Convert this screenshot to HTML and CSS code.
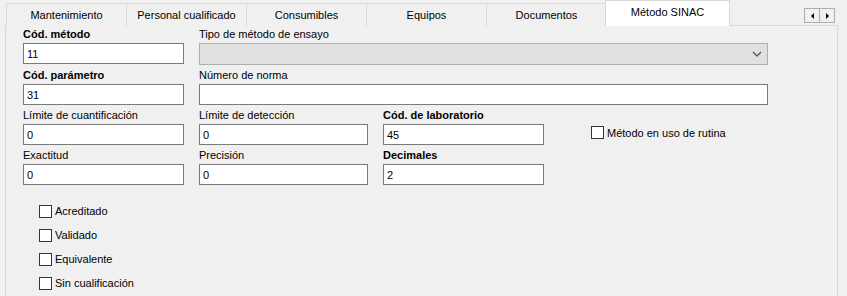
FILE: index.html
```html
<!DOCTYPE html>
<html>
<head>
    <link rel="stylesheet" href="styles.css">
</head>
<body>

<div class="tabbar">
    <div class="tab">Mantenimiento</div>
    <div class="tab">Personal cualificado</div>
    <div class="tab">Consumibles</div>
    <div class="tab">Equipos</div>
    <div class="tab">Documentos</div>
    <div class="tab active">Método SINAC</div>
    <div class="scroller">
        <span class="scroll-btn"><span class="arrow left"></span></span>
        <span class="scroll-btn"><span class="arrow right"></span></span>
    </div>
</div>

<div class="panel">
    <!-- Method fields -->
    <div class="fields">
        <div class="field">
            <label class="bold">Cód. método</label>
            <input type="text" value="11">
        </div>
        <div class="field wide">
            <label>Tipo de método de ensayo</label>
            <div class="combo">
                <svg width="10" height="6" viewBox="0 0 10 6"><path d="M1 1 L5 5 L9 1" fill="none" stroke="#555" stroke-width="1.3"/></svg>
            </div>
        </div>

        <div class="field">
            <label class="bold">Cód. parámetro</label>
            <input type="text" value="31">
        </div>
        <div class="field wide">
            <label>Número de norma</label>
            <input type="text" value="">
        </div>

        <div class="field">
            <label>Límite de cuantificación</label>
            <input type="text" value="0">
        </div>
        <div class="field">
            <label>Límite de detección</label>
            <input type="text" value="0">
        </div>
        <div class="field">
            <label class="bold">Cód. de laboratorio</label>
            <input type="text" value="45">
        </div>
        <div class="field routine">
            <div class="check"><span class="box"></span>Método en uso de rutina</div>
        </div>

        <div class="field">
            <label>Exactitud</label>
            <input type="text" value="0">
        </div>
        <div class="field">
            <label>Precisión</label>
            <input type="text" value="0">
        </div>
        <div class="field">
            <label class="bold">Decimales</label>
            <input type="text" value="2">
        </div>
    </div>

    <!-- Qualification checkboxes -->
    <div class="checks">
        <div class="check"><span class="box"></span>Acreditado</div>
        <div class="check"><span class="box"></span>Validado</div>
        <div class="check"><span class="box"></span>Equivalente</div>
        <div class="check"><span class="box"></span>Sin cualificación</div>
    </div>
</div>

</body>
</html>
```

FILE: styles.css
```css
/* General Styling */
body {
    font-family: "Liberation Sans", Arial, sans-serif;
    font-size: 11px;
    margin: 0;
    padding: 0;
    background-color: #f0f0f0;
    color: #000;
    overflow: hidden;
}

/* Tabs */
.tabbar {
    display: flex;
    align-items: flex-end;
    height: 26px;
    padding-left: 6px;
    position: relative;
    z-index: 1;
}

.tab {
    box-sizing: border-box;
    width: 121px;
    height: 23px;
    margin-right: -1px;
    border: 1px solid #d9d9d9;
    border-bottom: none;
    background-color: #f0f0f0;
    text-align: center;
    line-height: 23px;
}

.tab.active {
    width: 125px;
    height: 26px;
    margin-left: -1px;
    background-color: #fff;
    line-height: 22px;
}

.scroller {
    display: flex;
    margin-left: 75px;
    align-self: flex-start;
    margin-top: 8px;
}

.scroll-btn {
    box-sizing: border-box;
    width: 16px;
    height: 15px;
    border: 1px solid #adadad;
    margin-right: -1px;
    background-color: #f0f0f0;
    display: flex;
    align-items: center;
    justify-content: center;
}

.arrow {
    width: 0;
    height: 0;
    border-top: 3px solid transparent;
    border-bottom: 3px solid transparent;
}

.arrow.left {
    border-right: 3px solid #000;
}

.arrow.right {
    border-left: 3px solid #000;
}

/* Panel */
.panel {
    margin-top: -1px;
    margin-left: 5px;
    width: 833px;
    height: 271px;
    box-sizing: border-box;
    border: 1px solid #d9d9d9;
    border-bottom: none;
    background-color: #f0f0f0;
    padding: 2px 0 0 17px;
}

.fields {
    display: grid;
    grid-template-columns: 161px 169px 161px 209px;
    column-gap: 15px;
    row-gap: 4px;
}

.field label {
    display: block;
    height: 15px;
    line-height: 12px;
    color: #000;
}

.field label.bold {
    font-weight: bold;
}

.field.wide {
    grid-column: 2 / 5;
}

.field input {
    display: block;
    box-sizing: border-box;
    width: 100%;
    height: 21px;
    margin: 0;
    padding: 0 3px;
    border: 1px solid #7a7a7a;
    background: #fff;
    font-family: "Liberation Sans", Arial, sans-serif;
    font-size: 11px;
    color: #000;
    outline: none;
}

.combo {
    box-sizing: border-box;
    height: 22px;
    border: 1px solid #adadad;
    background-color: #e0e0e0;
    display: flex;
    align-items: center;
    justify-content: flex-end;
    padding-right: 5px;
}

.field.routine {
    padding: 17px 0 0 32px;
}

/* Checkboxes */
.check {
    display: flex;
    align-items: center;
    height: 24px;
}

.field.routine .check {
    height: 13px;
}

.box {
    box-sizing: border-box;
    width: 13px;
    height: 13px;
    border: 1px solid #333;
    background: #fff;
    margin-right: 3px;
}

.checks {
    margin-top: 14px;
    margin-left: 16px;
}
```
